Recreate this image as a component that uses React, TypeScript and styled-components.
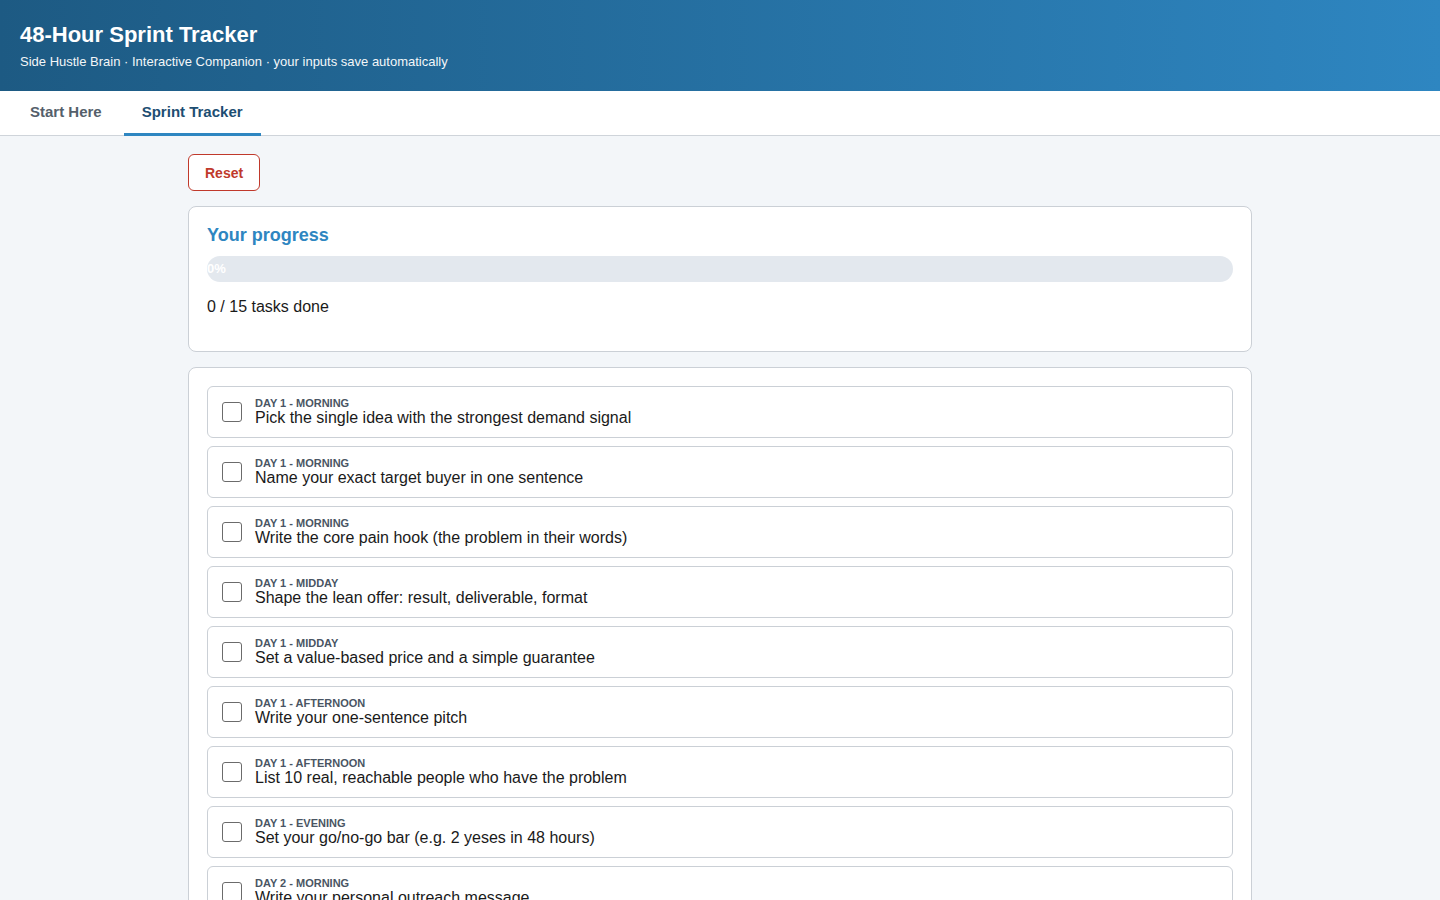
import React, { useState } from "react";
import styled, { createGlobalStyle } from "styled-components";

const tasks: { when: string; text: string }[] = [
  { when: "Day 1 - Morning", text: "Pick the single idea with the strongest demand signal" },
  { when: "Day 1 - Morning", text: "Name your exact target buyer in one sentence" },
  { when: "Day 1 - Morning", text: "Write the core pain hook (the problem in their words)" },
  { when: "Day 1 - Midday", text: "Shape the lean offer: result, deliverable, format" },
  { when: "Day 1 - Midday", text: "Set a value-based price and a simple guarantee" },
  { when: "Day 1 - Afternoon", text: "Write your one-sentence pitch" },
  { when: "Day 1 - Afternoon", text: "List 10 real, reachable people who have the problem" },
  { when: "Day 1 - Evening", text: "Set your go/no-go bar (e.g. 2 yeses in 48 hours)" },
  { when: "Day 2 - Morning", text: "Write your personal outreach message" },
  { when: "Day 2 - Morning", text: "Send outreach to your 10 people" },
  { when: "Day 2 - Midday", text: "Follow up with anyone who replied" },
  { when: "Day 2 - Afternoon", text: "Get on at least one call or chat" },
  { when: "Day 2 - Afternoon", text: "Ask for the sale" },
  { when: "Day 2 - Evening", text: "Count your yeses against your go/no-go bar" },
  { when: "Day 2 - Evening", text: "Decide: go, tweak, or drop" },
];

const App = () => {
  const [done, setDone] = useState<boolean[]>(tasks.map(() => false));
  const count = done.filter(Boolean).length;
  const pct = Math.round((count / tasks.length) * 100);

  return (
    <>
      <GlobalStyle />
      <Header>
        <Title>48-Hour Sprint Tracker</Title>
        <Subtitle>
          Side Hustle Brain · Interactive Companion · your inputs save automatically
        </Subtitle>
      </Header>
      <Tabs>
        <Tab>Start Here</Tab>
        <Tab active>Sprint Tracker</Tab>
      </Tabs>
      <Main>
        <Toolbar>
          <ResetButton onClick={() => setDone(tasks.map(() => false))}>Reset</ResetButton>
        </Toolbar>
        <Card>
          <CardTitle>Your progress</CardTitle>
          <Bar>
            <Fill style={{ width: `${pct}%` }}>{pct}%</Fill>
          </Bar>
          <Count>
            {count} / {tasks.length} tasks done
          </Count>
        </Card>
        <Card>
          <List>
            {tasks.map((t, i) => (
              <Item key={i}>
                <Box
                  type="checkbox"
                  checked={done[i]}
                  onChange={() =>
                    setDone(done.map((d, j) => (j === i ? !d : d)))
                  }
                />
                <ItemText>
                  <When>{t.when}</When>
                  <Task>{t.text}</Task>
                </ItemText>
              </Item>
            ))}
          </List>
        </Card>
      </Main>
    </>
  );
};

export default App;

const GlobalStyle = createGlobalStyle`
  body {
    margin: 0;
    background: #f3f6f9;
    font-family: "Liberation Sans", Arial, sans-serif;
    color: #1a1a1a;
  }
`;

const Header = styled.header`
  background: linear-gradient(90deg, #1d5a83 0%, #2e86c1 100%);
  color: #fff;
  padding: 21px 20px 21px;
`;

const Title = styled.h1`
  margin: 0;
  font-size: 22px;
  line-height: 28px;
  font-weight: 700;
`;

const Subtitle = styled.div`
  margin-top: 5px;
  font-size: 13px;
  line-height: 16px;
  opacity: 0.95;
`;

const Tabs = styled.nav`
  display: flex;
  gap: 4px;
  background: #fff;
  border-bottom: 1px solid #cfd4da;
  padding-left: 12px;
  height: 44px;
`;

const Tab = styled.div<{ active?: boolean }>`
  display: flex;
  align-items: center;
  padding: 0 18px 1px;
  font-size: 15px;
  font-weight: 700;
  color: ${({ active }) => (active ? "#1d4e72" : "#555f6b")};
  border-bottom: 3px solid ${({ active }) => (active ? "#2e86c1" : "transparent")};
  margin-bottom: -1px;
`;

const Main = styled.main`
  width: 1064px;
  margin: 0 auto;
  padding: 18px 0 40px;
  display: flex;
  flex-direction: column;
  gap: 15px;
`;

const Toolbar = styled.div`
  display: flex;
`;

const ResetButton = styled.button`
  height: 37px;
  padding: 0 16px;
  background: #fff;
  border: 1px solid #c0392b;
  border-radius: 6px;
  color: #c0392b;
  font-family: inherit;
  font-size: 14px;
  font-weight: 700;
  cursor: pointer;
`;

const Card = styled.section`
  background: #fff;
  border: 1px solid #cbd0d6;
  border-radius: 8px;
  padding: 18px;
`;

const CardTitle = styled.h2`
  margin: 0 0 11px;
  font-size: 18px;
  line-height: 20px;
  font-weight: 700;
  color: #2e86c1;
`;

const Bar = styled.div`
  height: 26px;
  border-radius: 13px;
  background: #e3e8ee;
  overflow: hidden;
`;

const Fill = styled.div`
  height: 100%;
  background: #2e86c1;
  color: #fff;
  font-size: 13px;
  font-weight: 700;
  line-height: 26px;
  white-space: nowrap;
  border-radius: 13px;
`;

const Count = styled.p`
  margin: 15px 0 16px;
  font-size: 16px;
  line-height: 20px;
`;

const List = styled.div`
  display: flex;
  flex-direction: column;
  gap: 8px;
`;

const Item = styled.label`
  display: flex;
  align-items: center;
  gap: 13px;
  padding: 10px 14px;
  border: 1px solid #cbd0d6;
  border-radius: 6px;
  background: #fff;
  cursor: pointer;
`;

const Box = styled.input`
  appearance: none;
  width: 20px;
  height: 20px;
  margin: 0;
  border: 1px solid #6b6b6b;
  border-radius: 3px;
  background: #fff;
  flex: none;
  &:checked {
    background: #2e86c1;
    border-color: #2e86c1;
  }
`;

const ItemText = styled.div`
  display: flex;
  flex-direction: column;
`;

const When = styled.span`
  font-size: 11px;
  line-height: 12px;
  font-weight: 700;
  text-transform: uppercase;
  color: #4a5563;
`;

const Task = styled.span`
  font-size: 16px;
  line-height: 18px;
`;
